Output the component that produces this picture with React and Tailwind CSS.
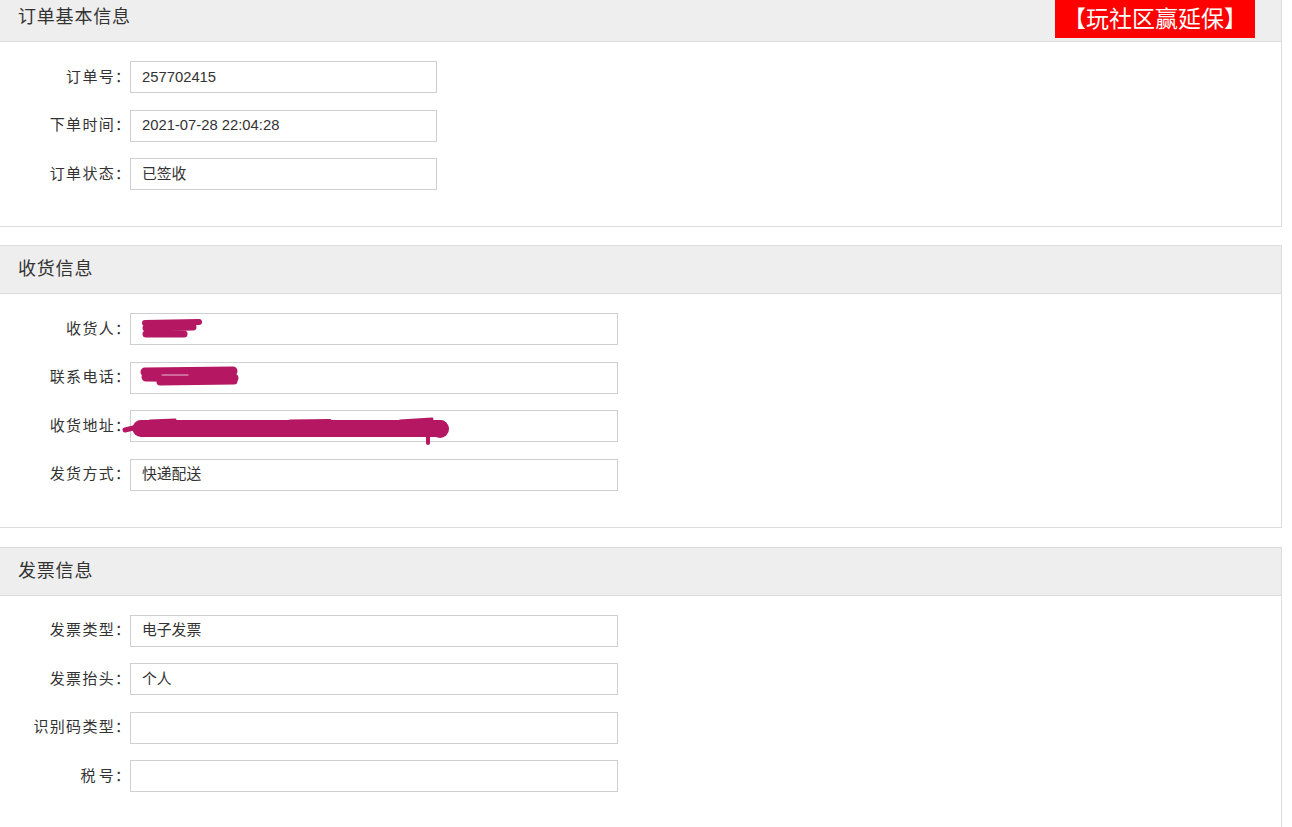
import React from "react";

const FONT = { fontFamily: '"Liberation Sans", Arial, "Noto Sans CJK SC", sans-serif' };
const INK = "#b51763";

function Redact({ kind }) {
  if (kind === "name")
    return (
      <svg className="absolute left-0 top-0 pointer-events-none" width="640" height="40" fill="none" stroke={INK} strokeLinecap="round" strokeLinejoin="round">
        <path d="M145 10 L199 9" strokeWidth="6" />
        <path d="M146 15 L193 14" strokeWidth="7" />
        <path d="M146 21 L184 21" strokeWidth="7" />
      </svg>
    );
  if (kind === "phone")
    return (
      <svg className="absolute left-0 top-0 pointer-events-none" width="640" height="40" fill="none" stroke={INK} strokeLinecap="round" strokeLinejoin="round">
        <path d="M145 10 L233 9" strokeWidth="9" />
        <path d="M146 15 L234 16" strokeWidth="9" />
        <path d="M160 20 L234 19" strokeWidth="7" />
        <path d="M162 13 L188 13" stroke="#e6bfd0" strokeWidth="1" />
      </svg>
    );
  return (
    <svg className="absolute left-0 top-0 pointer-events-none" width="640" height="40" fill="none" stroke={INK} strokeLinecap="round" strokeLinejoin="round">
      <path d="M125 20 L146 15" strokeWidth="5" />
      <path d="M141 18.5 L440 18.5" strokeWidth="17" />
      <path d="M150 11 L175 10 M290 11 L330 10.5 M400 11 L432 9" strokeWidth="3" />
      <circle cx="440" cy="19" r="9" fill={INK} stroke="none" />
      <path d="M428 22 L428 33" strokeWidth="4" />
    </svg>
  );
}

function Row({ label, value, wide, redact }) {
  return (
    <div className="relative flex items-center">
      <div className="w-[130px] flex justify-end items-center text-[15px] text-[#333] whitespace-pre">
        <span className="tracking-[1.3px]">{label}</span>
        <span className="w-[15px]">：</span>
      </div>
      <div
        className={`h-[32px] border border-[#cfcfcf] bg-white flex items-center pl-[11px] text-[14.8px] text-[#333] ${
          wide ? "w-[488px]" : "w-[307px]"
        }`}
      >
        {value}
      </div>
      {redact && <Redact kind={redact} />}
    </div>
  );
}

function Panel({ title, children, badge, className = "" }) {
  return (
    <div className={`border border-[#dddddd] bg-white ${className}`}>
      <div className="relative h-[48px] bg-[#eeeeee] border-b border-[#dcdcdc] flex items-center pl-[18px]">
        <span className="text-[18px] tracking-[0.8px] text-[#333]">{title}</span>
        {badge && (
          <div className="absolute right-[26px] top-[6px] w-[200px] h-[38px] bg-[#ff0000] text-white text-[23px] leading-[36px] flex items-center justify-center">
            【玩社区赢延保】
          </div>
        )}
      </div>
      <div className="pt-[19px] pb-[36px] flex flex-col gap-[16.5px]">{children}</div>
    </div>
  );
}

export default function App() {
  return (
    <div className="w-[1292px] h-[827px] overflow-hidden bg-white" style={FONT}>
      <div className="ml-[-1px] mr-[10px] mt-[-7px] flex flex-col">
        <Panel title="订单基本信息" badge>
          <Row label="订单号" value="257702415" />
          <Row label="下单时间" value="2021-07-28 22:04:28" />
          <Row label="订单状态" value="已签收" />
        </Panel>
        <Panel title="收货信息" className="mt-[18px]">
          <Row label="收货人" value="" wide redact="name" />
          <Row label="联系电话" value="" wide redact="phone" />
          <Row label="收货地址" value="" wide redact="addr" />
          <Row label="发货方式" value="快递配送" wide />
        </Panel>
        <Panel title="发票信息" className="mt-[19px]">
          <Row label="发票类型" value="电子发票" wide />
          <Row label="发票抬头" value="个人" wide />
          <Row label="识别码类型" value="" wide />
          <Row label={<>税<span className="ml-[2px]">号</span></>} value="" wide />
        </Panel>
      </div>
    </div>
  );
}
